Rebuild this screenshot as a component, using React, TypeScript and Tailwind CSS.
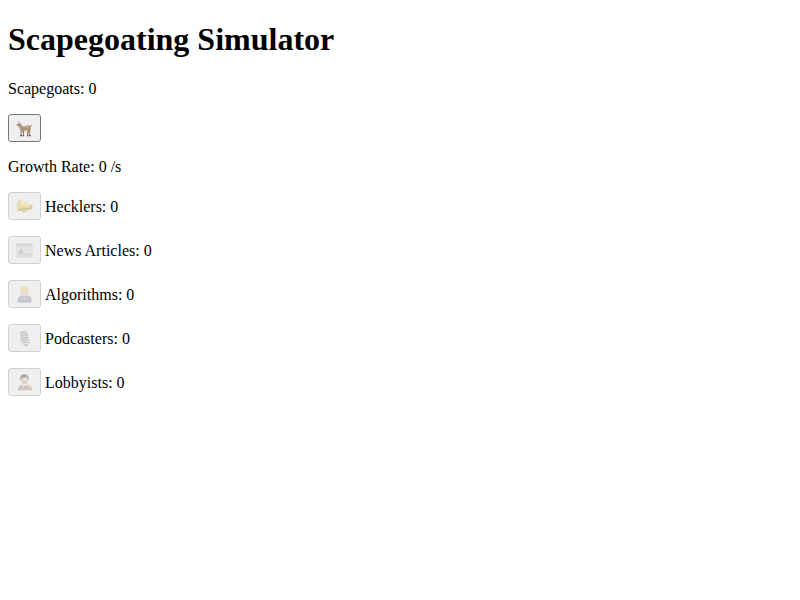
import { useState } from "react";
import type { ReactNode } from "react";

function Icon({ children }: { children: ReactNode }) {
  return (
    <svg viewBox="0 0 51 48" className="h-4 w-[17px] shrink-0 overflow-visible" aria-hidden="true">
      {children}
    </svg>
  );
}

const goat = (
  <Icon>
    <path d="M10 9 Q9 4 5 4" fill="none" stroke="#a39a90" strokeWidth="2" />
    <path d="M19 29 L21 38 L20 48 L23 48 L25 30Z M35 27 L34 37 L33 48 L36 48 L40 30Z" fill="#8d7864" />
    <path d="M2 14 L7 9 L13 11 L17 17 Q26 19 36 16 L43 17 L46 13 L48 15 L45 20 L44 29 L42 36 L43 48 L39 48 L38 37 L36 30 Q26 34 20 30 L18 38 L17 48 L13 48 L14 34 L11 26 L9 18 L3 18Z" fill="#b0977c" />
    <path d="M17 18 Q27 20 38 17 L39 21 Q28 23 18 22Z" fill="#c3ad94" />
    <path d="M12 11 L18 14 L12 15Z" fill="#84705e" />
    <path d="M13 45h5v4h-5z M20 46h4v3h-4z M33 46h4v3h-4z M39 45h5v4h-5z" fill="#51483f" />
    <path d="M5 18 L8 18 L7 24Z" fill="#a79b8c" />
    <circle cx="8" cy="12" r="1" fill="#4b423b" />
  </Icon>
);

const megaphone = (
  <Icon>
    <path d="M17 33 L19 41 L31 40 L34 34" fill="none" stroke="#d8cba4" strokeWidth="3" strokeLinejoin="round" />
    <path d="M9 4 L48 23 Q52 28 48 33 L6 39Z" fill="#e8dcae" />
    <path d="M11 8 L47 25 L47 28 L11 19Z" fill="#f2e9c8" />
    <path d="M9 32 L47 30 L48 33 L6 39Z" fill="#d3c394" />
    <ellipse cx="7" cy="21" rx="4" ry="18" fill="#ded1a9" transform="rotate(7 7 21)" />
    <ellipse cx="7" cy="21" rx="2" ry="14" fill="#ebe2c5" transform="rotate(7 7 21)" />
    <path d="M40 19 L48 23 Q52 28 48 33 L41 34Z" fill="#dccd9b" />
  </Icon>
);

const newspaper = (
  <Icon>
    <rect x="1" y="4" width="49" height="43" fill="#dedfdf" />
    <path d="M3 7h7m3 0h5m3 0h9m3 0h5m3 0h7" stroke="#c9cbcb" strokeWidth="3" />
    <path d="M2 12h47M2 36h47" stroke="#cfd0d0" strokeWidth="2" />
    <rect x="3" y="14" width="45" height="20" fill="#e4e5e5" />
    <path d="M7 34 L9 28 L12 27 L12 21 L17 21 L17 27 L20 29 L22 34Z" fill="#c6c8c8" />
    <path d="M28 18h18M28 23h18M28 28h18M4 40h18M28 40h18M4 44h18M28 44h18" stroke="#d6d7d7" />
  </Icon>
);

const technologist = (
  <Icon>
    <path d="M4 49 L5 38 Q8 30 18 29 H33 Q43 30 46 38 L47 49Z" fill="#bcc5df" />
    <path d="M13 18 Q10 1 25 1 Q40 1 38 18 L36 26 H15Z" fill="#eadfb9" />
    <path d="M15 15 Q22 14 27 9 Q30 13 36 14 L35 22 Q33 29 26 30 Q18 29 16 22Z" fill="#f2e1d0" />
    <path d="M20 18h2m8 0h2" stroke="#b9ada3" strokeWidth="2" />
    <path d="M23 25 Q26 27 29 25" fill="none" stroke="#dec0b3" />
    <rect x="9" y="29" width="34" height="20" rx="2" fill="#c9cacb" />
    <rect x="8" y="47" width="36" height="2" fill="#bbbcbe" />
    <circle cx="26" cy="38" r="2" fill="#e5e5e6" />
  </Icon>
);

const microphone = (
  <Icon>
    <path d="M13 29 L17 40 Q20 46 27 45 L39 42 Q42 36 40 25" fill="none" stroke="#cfd1d2" strokeWidth="2" />
    <path d="M24 44 L25 49 L35 48 L33 42Z" fill="#c5c7c9" />
    <g transform="rotate(-9 25 22)">
      <rect x="13" y="1" width="24" height="41" rx="10" fill="#e1e3e3" />
      <path d="M16 6 L34 10M14 13 L36 17M14 20 L36 24M14 27 L36 31M16 34 L34 38" stroke="#b7babc" strokeWidth="3" />
    </g>
  </Icon>
);

const lobbyist = (
  <Icon>
    <path d="M6 49 L7 40 Q10 33 20 32 H34 Q45 34 47 40 L48 49Z" fill="#c5c6c7" />
    <path d="M21 31 H32 L31 40 L27 48 L22 39Z" fill="#f0f0f0" />
    <path d="M25 35h4l1 6-3 7-3-7Z" fill="#dda9a9" />
    <path d="M13 17 Q11 1 25 1 Q39 1 38 15 L36 22 H15Z" fill="#aaa8a7" />
    <path d="M16 13 Q25 12 31 9 L36 14 L36 22 Q34 31 26 32 Q18 31 16 22Z" fill="#efded2" />
    <path d="M20 18h3m7 0h3" stroke="#a3968d" strokeWidth="2" />
    <path d="M20 27 Q26 22 32 27" fill="none" stroke="#aaa29d" strokeWidth="2" />
    <path d="M35 38 Q38 32 43 35 L47 40 L43 45 L36 44Z" fill="#e6cfb0" />
  </Icon>
);

const upgrades = [
  { name: "Hecklers", icon: megaphone },
  { name: "News Articles", icon: newspaper },
  { name: "Algorithms", icon: technologist },
  { name: "Podcasters", icon: microphone },
  { name: "Lobbyists", icon: lobbyist },
];

const buttonClass =
  "flex h-7 w-[33px] shrink-0 items-center justify-center rounded-[3px] border border-[#767676] bg-[#efefef] disabled:border-[#d1d1d1]";

export default function App() {
  const [scapegoats, setScapegoats] = useState(0);

  return (
    <main className="flex flex-col items-start gap-4 bg-white px-2 pt-[21px] pb-4 font-['Liberation_Serif',serif] text-base leading-[18px] text-black">
      <h1 className="mb-[6px] text-[32px] leading-[37px] font-bold">Scapegoating Simulator</h1>
      <p>Scapegoats: {scapegoats}</p>
      <button type="button" aria-label="Add scapegoat" className={buttonClass} onClick={() => setScapegoats(scapegoats + 1)}>
        {goat}
      </button>
      <p>Growth Rate: 0 /s</p>
      {upgrades.map(({ name, icon }) => (
        <div key={name} className="flex items-center gap-1">
          <button type="button" aria-label={name} className={buttonClass} disabled>
            {icon}
          </button>
          <span className="pt-0.5">{name}: 0</span>
        </div>
      ))}
    </main>
  );
}
